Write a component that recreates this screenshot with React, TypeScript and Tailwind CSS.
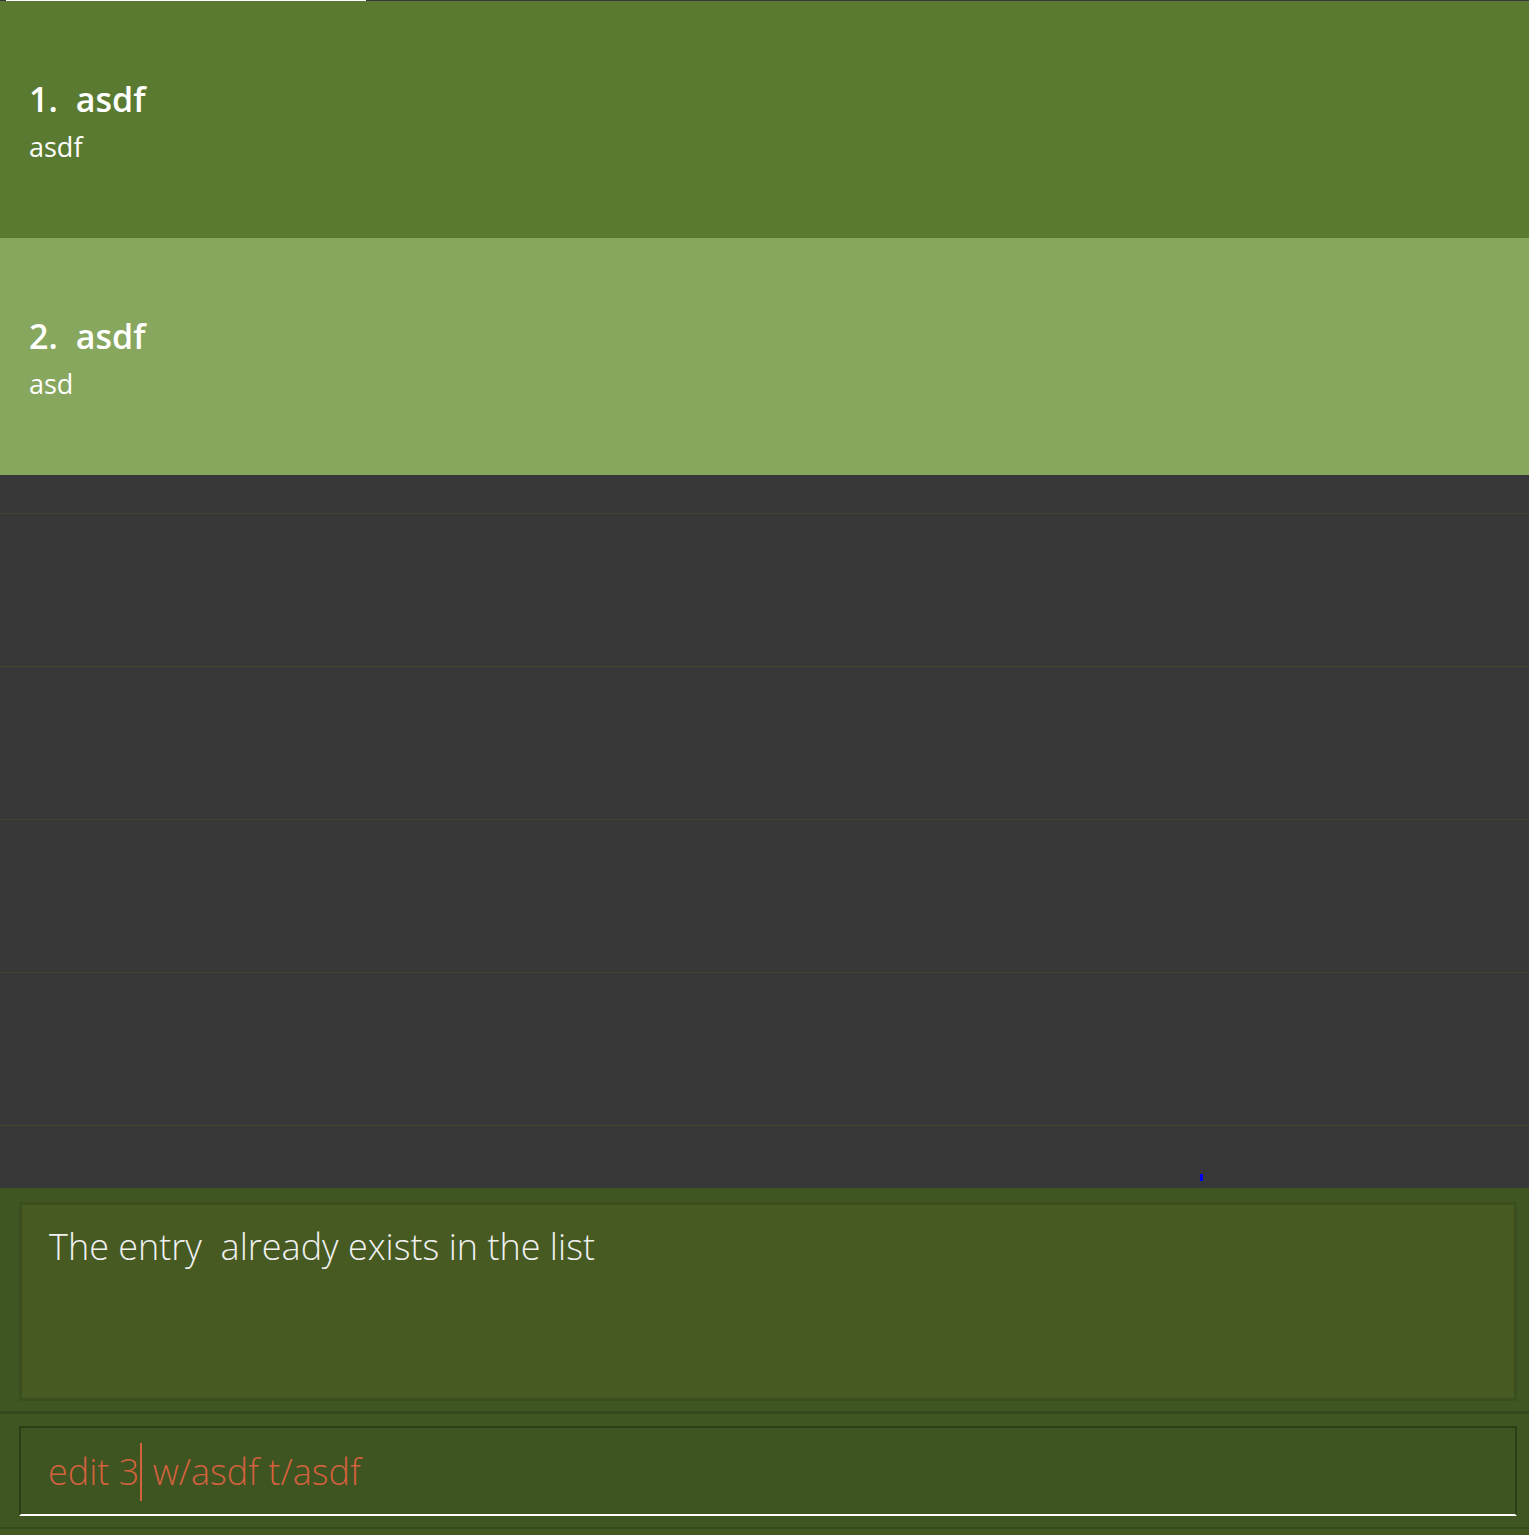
const entries = [
  { index: "1.", title: "asdf", detail: "asdf", bg: "bg-[#5b7a31]" },
  { index: "2.", title: "asdf", detail: "asd", bg: "bg-[#87a65e]" },
];

const App = () => {
  return (
    <div className="h-[1535px] w-full flex flex-col bg-[#383838] font-['Open_Sans','Noto_Sans',sans-serif] overflow-hidden">
      {/* list */}
      <div className="relative h-[1188px] shrink-0 flex flex-col overflow-hidden">
        <div className="h-px shrink-0 flex">
          <div className="w-[6px] bg-[#383838]" />
          <div className="w-[360px] bg-white" />
          <div className="flex-1 bg-[#383838]" />
        </div>
        {entries.map((e) => (
          <div
            key={e.index}
            className={`h-[237px] shrink-0 ${e.bg} flex flex-col px-[29px] pt-[75px] text-white`}
          >
            <div className="flex items-baseline text-[34px] font-semibold leading-[46px]">
              <span>{e.index}</span>
              <span className="ml-[18px]">{e.title}</span>
            </div>
            <div className="mt-[5px] text-[27px] leading-[40px]">{e.detail}</div>
          </div>
        ))}
        <div className="h-[38px] shrink-0" />
        {[0, 1, 2, 3].map((i) => (
          <div key={i} className="h-[153px] shrink-0 border-t border-[#3b4a2c]" />
        ))}
        <div className="flex-1 border-t border-[#3b4a2c]" />
        <div className="absolute left-[1200px] top-[1174px] w-[3px] h-[7px] bg-[#0000ff]" />
      </div>

      {/* result pane */}
      <div className="flex-1 bg-[#3f5522] flex flex-col">
        <div className="h-[223px] pl-[19px] pr-[12px] pt-[14px] pb-[10px]">
          <div className="h-[199px] border-[3px] border-[#3a4f1d] bg-[#465a22] px-[27px] pt-[16px]">
            <p className="text-[36px] font-light text-[#f0f0f0] leading-[52px]">
              The entry&nbsp; already exists in the list
            </p>
          </div>
        </div>
        <div className="h-[3px] bg-[#354a1c]" />
        <div className="h-[113px] pl-[19px] pr-[12px] pt-[12px]">
          <div className="h-[90px] border-t-2 border-l-2 border-r-2 border-[#2d3f16] border-b-2 border-b-white bg-[#3e5421] pl-[27px] pt-[15px]">
            <div className="flex items-center text-[36px] font-light text-[#d3623f] leading-[58px] whitespace-pre">
              <span>edit 3</span>
              <span className="inline-block w-[2px] h-[58px] bg-[#d3623f] mx-[1px]" />
              <span>{" w/asdf t/asdf"}</span>
            </div>
          </div>
        </div>
        <div className="h-[2px] bg-[#354a1c]" />
        <div className="flex-1 bg-[#455a22]" />
      </div>
    </div>
  );
};

export default App;
